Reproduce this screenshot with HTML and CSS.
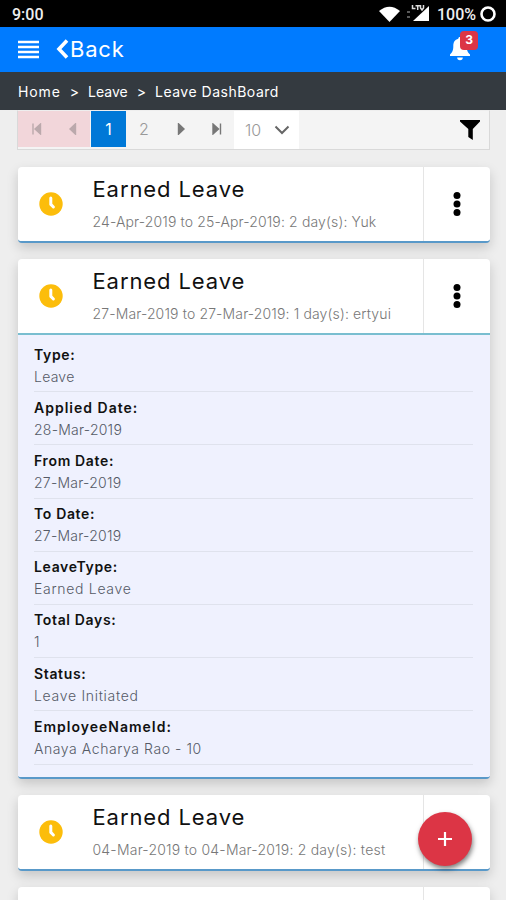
FILE: index.html
```html
<!DOCTYPE html>
<html lang="en">
<head>
<meta charset="utf-8">
<meta name="viewport" content="width=device-width, initial-scale=1">
<title>Leave DashBoard</title>
<link rel="stylesheet" href="styles.css">
</head>
<body>
<svg class="defs" aria-hidden="true">
  <symbol id="clock" viewBox="0 0 24 24"><circle cx="12" cy="12" r="11.700" fill="#fcbd0b"/><path d="M11.800 6v6.400l2.600 2.600" fill="none" stroke="#fff" stroke-width="3" stroke-linecap="round" stroke-linejoin="round"/></symbol>
  <symbol id="dots" viewBox="0 0 8 24"><circle cx="4" cy="3.6" r="3.5"/><circle cx="4" cy="12" r="3.5"/><circle cx="4" cy="20.4" r="3.5"/></symbol>
</svg>
<div class="status">
  <span class="time">9:00</span>
  <svg class="wifi" viewBox="0 0 21 16"><path d="M0 5Q10.500-3.500 21 5L10.500 16z" fill="#fff"/></svg>
  <svg class="signal" viewBox="0 0 24 17"><path d="M23 1v15H7z" fill="#fff"/><path d="M1 7h3M1 12h3" stroke="#777" stroke-width="1.500"/><path d="M6.500 0v3.500h3M9.500.8H14M11.700.8V5M14.500 0v3l1.500 2 1.500-2V0" fill="none" stroke="#ddd" stroke-width="1.500"/></svg>
  <span class="percent">100%</span>
  <svg class="ring" viewBox="0 0 16 16"><circle cx="8" cy="8" r="6.500" fill="none" stroke="#fff" stroke-width="2.600"/></svg>
</div>
<header class="bar">
  <svg class="menu" viewBox="0 0 21 19"><path d="M0 2h21M0 7h21M0 12h21M0 17h21" stroke="#fff" stroke-width="2.600"/></svg>
  <svg class="chev" viewBox="0 0 13 20"><path d="M11 1.500L3 10l8 8.500" fill="none" stroke="#fff" stroke-width="3.600"/></svg>
  <span class="back">Back</span>
  <div class="bell">
    <svg viewBox="0 0 20 24"><path d="M10 0c1 0 1.700.7 1.700 1.700 3.600.8 5 3.600 5 7.500 0 4.500 1.200 6.200 3.300 8.300V19H0v-1.500c2.100-2.100 3.300-3.800 3.300-8.300 0-3.900 1.400-6.700 5-7.500C8.300.7 9 0 10 0zM7.200 20.500h5.600a2.800 2.800 0 0 1-5.600 0z" fill="#fff"/></svg>
    <span class="badge">3</span>
  </div>
</header>
<nav class="crumbs"><span class="home">Home</span><span>&gt;</span><span>Leave</span><span>&gt;</span><span class="here">Leave DashBoard</span></nav>
<main>
  <div class="pager">
    <div class="cell off"><svg viewBox="0 0 12 12"><path d="M2.500.5v11M10 1v10L4.500 6z"/></svg></div>
    <div class="cell off"><svg viewBox="0 0 12 12"><path d="M9 .8v10.400L3.500 6z"/></svg></div>
    <div class="cell current">1</div>
    <div class="cell">2</div>
    <div class="cell"><svg viewBox="0 0 12 12"><path d="M4 .8v10.400L9.500 6z"/></svg></div>
    <div class="cell"><svg viewBox="0 0 12 12"><path d="M10 .5v11M2.500 1v10L8 6z"/></svg></div>
    <div class="size">10<svg viewBox="0 0 16 10"><path d="M1.500 1.500L8 8l6.500-6.500"/></svg></div>
    <svg class="filter" viewBox="0 0 20 20"><path d="M0 0h20v1.500L12.800 9v11l-4.500-3V9L0 1.500z"/></svg>
  </div>
  <section class="card">
    <div class="head"><svg class="clock"><use href="#clock"/></svg><div class="info"><h2>Earned Leave</h2><p>24-Apr-2019 to 25-Apr-2019: 2 day(s): Yuk</p></div><div class="more"><svg><use href="#dots"/></svg></div></div>
  </section>
  <section class="card open">
    <div class="head"><svg class="clock"><use href="#clock"/></svg><div class="info"><h2>Earned Leave</h2><p>27-Mar-2019 to 27-Mar-2019: 1 day(s): ertyui</p></div><div class="more"><svg><use href="#dots"/></svg></div></div>
    <dl>
      <div><dt>Type:</dt><dd>Leave</dd></div>
      <div><dt class="wide">Applied Date:</dt><dd>28-Mar-2019</dd></div>
      <div><dt>From Date:</dt><dd>27-Mar-2019</dd></div>
      <div><dt>To Date:</dt><dd>27-Mar-2019</dd></div>
      <div><dt>LeaveType:</dt><dd class="words">Earned Leave</dd></div>
      <div><dt>Total Days:</dt><dd>1</dd></div>
      <div><dt>Status:</dt><dd class="words">Leave Initiated</dd></div>
      <div><dt class="wide">EmployeeNameId:</dt><dd class="name">Anaya Acharya Rao - 10</dd></div>
    </dl>
  </section>
  <section class="card">
    <div class="head"><svg class="clock"><use href="#clock"/></svg><div class="info"><h2>Earned Leave</h2><p class="loose">04-Mar-2019 to 04-Mar-2019: 2 day(s): test</p></div><div class="more"><svg><use href="#dots"/></svg></div></div>
  </section>
  <section class="card"><div class="head"><div class="info"></div><div class="more"></div></div></section>
</main>
<button class="fab" aria-label="Add"><svg viewBox="0 0 16 16"><path d="M8 1v14M1 8h14" stroke="#fff" stroke-width="2.200"/></svg></button>
</body>
</html>
```
FILE: styles.css
```css
* { box-sizing: border-box; }
body { margin: 0; height: 900px; overflow: hidden; position: relative; background: #eee; font-family: Inter, "Liberation Sans", sans-serif; color: #111; display: flex; flex-direction: column; }
.defs { position: absolute; width: 0; height: 0; }
.status { flex: none; height: 27px; background: #000; color: #eee; display: flex; align-items: center; padding: 2px 10px 0 12px; font: 500 16px Roboto, sans-serif; }
.time { margin-right: auto; }
.wifi { width: 21px; height: 16px; margin-right: 6px; margin-top: -2px; }
.signal { width: 24px; height: 17px; margin-right: 7px; margin-top: -2px; }
.ring { width: 16px; height: 16px; margin-left: 4px; margin-top: -2px; }
.bar { flex: none; height: 45px; background: #007bff; display: flex; align-items: center; padding: 0 35px 1px 18px; color: #fff; }
.menu { width: 21px; height: 19px; }
.chev { width: 13px; height: 20px; margin-left: 17px; }
.back { font-size: 22px; letter-spacing: .8px; margin-left: 1px; }
.bell { position: relative; margin-left: auto; width: 21px; height: 24px; }
.bell svg { display: block; width: 20px; height: 24px; }
.badge { position: absolute; left: 10px; top: -6px; width: 18px; height: 19px; border-radius: 4px; background: #dc3545; font-weight: 700; font-size: 12px; line-height: 18px; text-align: center; }
.crumbs { flex: none; height: 38px; background: #343a40; color: #fff; display: flex; align-items: center; padding-left: 18px; gap: 9px; font-size: 14px; }
.home { letter-spacing: .9px; }
.here { letter-spacing: .5px; }
main { flex: 1; min-height: 0; overflow: hidden; padding: 0 16px 0 18px; margin-top: -1px; padding-top: 1px; }
.pager { height: 40px; background: #f4f4f4; border: 1px solid #d9d9d9; border-top-color: #eee; display: flex; margin: 0 0 17px -1px; color: #999; font-size: 16px; }
.cell { width: 36px; height: 36px; display: flex; align-items: center; justify-content: center; font-weight: 300; }
.cell svg { width: 13px; height: 12px; fill: #777; stroke: #777; stroke-width: 1.400; }
.cell.off { background: #f2d6da; }
.cell.off svg { fill: #bba9ac; stroke: #bba9ac; }
.cell.current { background: #0078d7; color: #fff; font-weight: 400; margin-left: 1px; width: 35px; }
.size { width: 65px; background: #fff; display: flex; align-items: center; padding: 0 9px 1px 11px; justify-content: space-between; font-weight: 300; }
.size svg { width: 16px; height: 10px; fill: none; stroke: #666; stroke-width: 2; }
.filter { width: 20px; height: 20px; margin: 9px 9px 0 auto; }
.card { background: #fff; border-radius: 4px; border-bottom: 2px solid #5999c9; box-shadow: 0 5px 12px rgba(0, 0, 0, .17); margin-bottom: 16px; overflow: hidden; }
.head { height: 74px; display: flex; }
.clock { width: 24px; height: 24px; margin: 24.500px 0 0 20.500px; }
.info { flex: 1; padding-left: 30px; }
h2 { margin: 9px 0 0; font-size: 22px; line-height: 27px; font-weight: 400; letter-spacing: .9px; white-space: nowrap; }
p { margin: 10px 0 0; font-size: 14px; line-height: 18px; font-weight: 300; letter-spacing: .14px; color: #777; white-space: nowrap; }
.loose { letter-spacing: .21px; }
.more { width: 67px; border-left: 1px solid #e5e5e5; display: flex; align-items: center; justify-content: center; }
.more svg { width: 8px; height: 24px; fill: #000; }
.open .head { height: 76px; border-bottom: 2px solid #79bed0; }
dl { margin: 0; background: #eff1fe; padding: 4px 17px 12px 16px; height: 442px; }
dl div { height: 53.200px; border-bottom: 1px solid #dfe2ed; padding-top: 6.500px; }
dt { font-size: 14px; line-height: 18px; font-weight: 600; letter-spacing: .65px; }
.wide { letter-spacing: 1px; }
dd { margin: 4px 0 0; font-size: 14px; line-height: 18px; font-weight: 300; letter-spacing: .25px; color: #555a66; }
.words { letter-spacing: .7px; }
.name { letter-spacing: .57px; }
.fab { position: absolute; left: 418px; top: 812px; width: 54px; height: 54px; border: 0; border-radius: 50%; background: #dc3545; box-shadow: 1px 3px 5px rgba(0, 0, 0, .5); display: flex; align-items: center; justify-content: center; padding: 0; }
.fab svg { width: 16px; height: 16px; }
```
